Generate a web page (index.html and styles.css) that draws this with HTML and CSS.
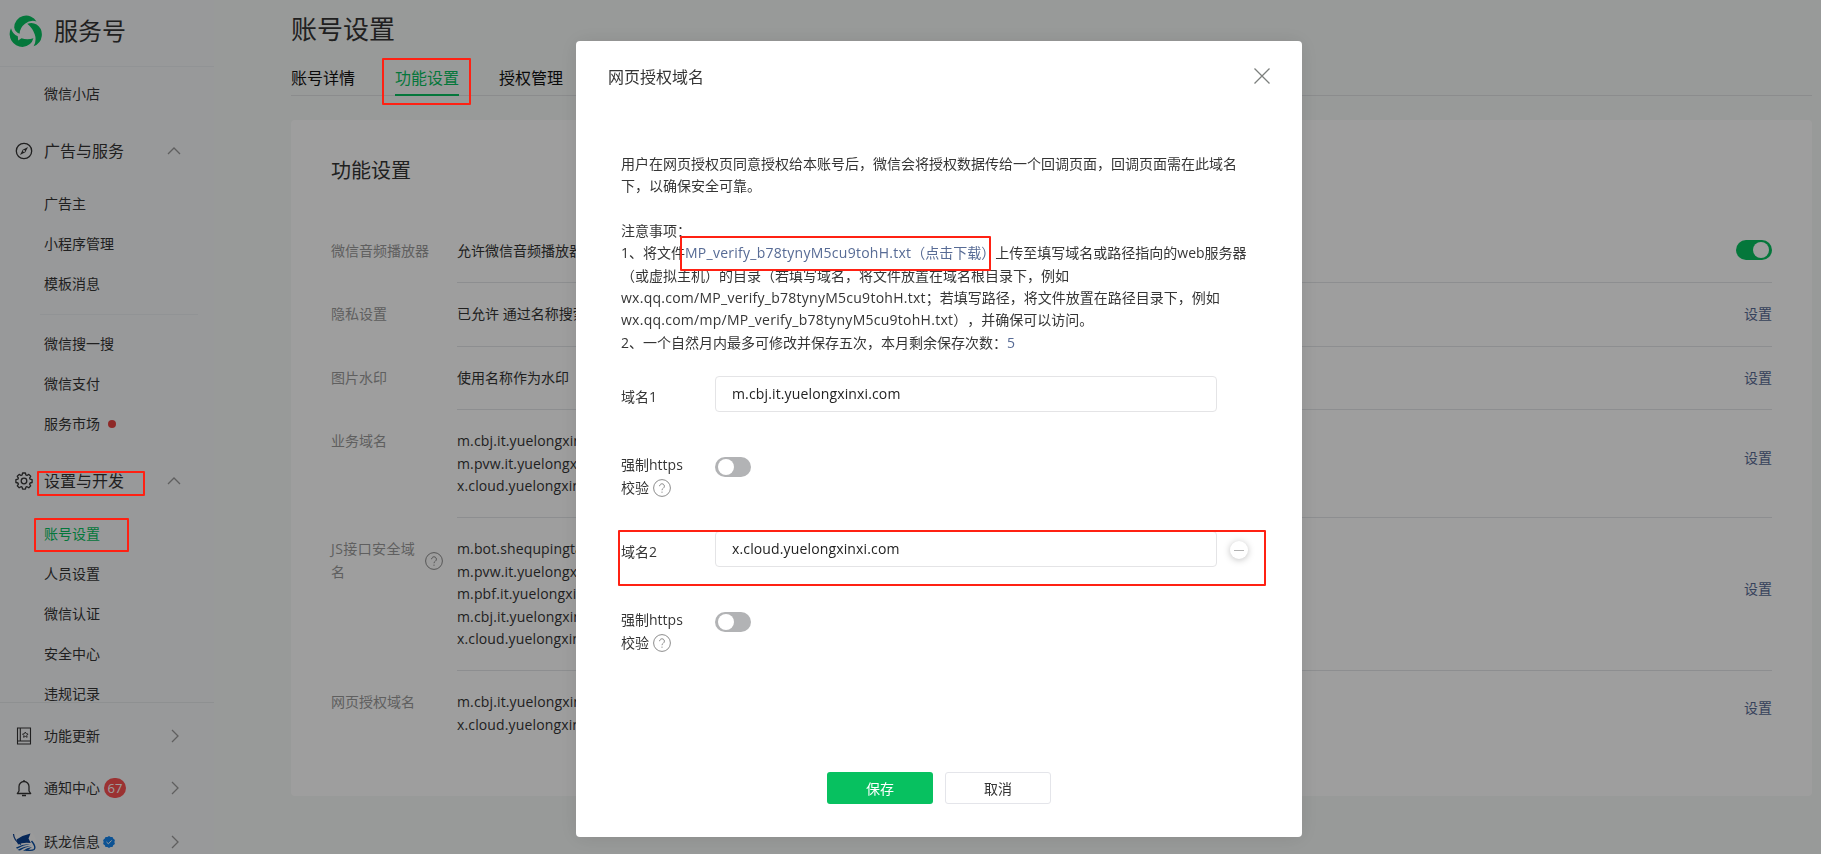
FILE: index.html
```
<!DOCTYPE html>
<html lang="zh-CN">
  <head>
    <meta charset="utf-8">
    <title>服务号</title>
    <link rel="stylesheet" href="styles.css">
  </head>
  <body>
  <div class="page">
    <div class="sidebar">
      <div class="logo">
        <svg width="34" height="34" viewBox="0 0 34 34" fill="#07c160">
          <path d="M6.200 13.500A12 12 0 0 1 28.500 7.400Q22.500 5.400 17 9.800Q12 13.600 11.600 19.700Q6.900 17.900 6.200 13.500Z"/>
          <path d="M19.300 9.800Q24.500 8 28.600 10.600A12.300 12.300 0 0 1 25.600 32.300Q28.900 26.400 26.700 20.300Q24.700 14.300 19.300 9.800Z"/>
          <path d="M3 14.200Q4.500 20 9.800 22.300L10.200 26.600L13.500 24.300Q19.500 26 25.400 24.300Q23.500 32 14.500 33A13 13 0 0 1 3 14.200Z"/>
        </svg>
        <span>服务号</span>
      </div>
      <div class="menu">
        <div class="item">微信小店</div>
        <div class="group">
          <svg class="icon" width="18" height="18" viewBox="0 0 18 18" fill="none" stroke="#353535" stroke-width="1.3">
            <circle cx="9" cy="9" r="7.700"/>
            <path d="M13 5L10.300 10.300L5 13L7.700 7.700Z" fill="#353535" stroke="none"/>
            <circle cx="9" cy="9" r="1" fill="#f6f7f9" stroke="none"/>
          </svg>
          <span>广告与服务</span>
          <svg class="arrow" width="14" height="8" viewBox="0 0 14 8" fill="none" stroke="#9a9a9a" stroke-width="1.300"><path d="M1 7L7 1L13 7"/></svg>
        </div>
        <div class="item">广告主</div>
        <div class="item">小程序管理</div>
        <div class="item">模板消息</div>
        <div class="line"></div>
        <div class="item">微信搜一搜</div>
        <div class="item">微信支付</div>
        <div class="item">服务市场<i class="dot"></i></div>
        <div class="group">
          <svg class="icon" width="18" height="18" viewBox="0 0 18 18" fill="none" stroke="#353535" stroke-width="1.3" stroke-linejoin="round">
            <path d="M7.600 1h2.800l.5 2 1.100.5 1.800-1.100 1.900 1.900-1.100 1.800.5 1.100 2 .5v2.800l-2 .5-.5 1.100 1.100 1.800-1.900 1.900-1.800-1.100-1.100.5-.5 2H7.600l-.5-2-1.100-.5-1.800 1.100-1.900-1.900 1.100-1.800-.5-1.100-2-.5V7.700l2-.5.5-1.100-1.100-1.800 1.900-1.900L6 3.500l1.100-.5z"/>
            <circle cx="9" cy="9" r="2.800"/>
          </svg>
          <span>设置与开发</span>
          <svg class="arrow" width="14" height="8" viewBox="0 0 14 8" fill="none" stroke="#9a9a9a" stroke-width="1.300"><path d="M1 7L7 1L13 7"/></svg>
        </div>
        <div class="item active">账号设置</div>
        <div class="item">人员设置</div>
        <div class="item">微信认证</div>
        <div class="item">安全中心</div>
        <div class="item">违规记录</div>
      </div>
      <div class="side-foot">
        <div class="foot-item">
          <svg class="icon" width="18" height="18" viewBox="0 0 18 18" fill="none" stroke="#353535" stroke-width="1.100">
            <path d="M2.500 1h13v16h-13zM5.300 1v13M2.500 14h13"/>
            <path d="M10.300 5l.9 1.700 1.900.3-1.300 1.400.3 1.900-1.800-.9-1.700.9.3-1.900L7.500 7l1.900-.3z" stroke-width=".9"/>
          </svg>
          <span>功能更新</span>
          <svg class="arrow" width="8" height="14" viewBox="0 0 8 14" fill="none" stroke="#9a9a9a" stroke-width="1.300"><path d="M1 1L7 7L1 13"/></svg>
        </div>
        <div class="foot-item">
          <svg class="icon" width="18" height="18" viewBox="0 0 18 18" fill="none" stroke="#353535" stroke-width="1.300">
            <path d="M2.300 14.500L4 12V7.500a5 5 0 0 1 10 0V12l1.700 2.500z" stroke-linejoin="round"/>
            <path d="M9 1v1.500M7 16.500h4"/>
          </svg>
          <span>通知中心</span>
          <b class="badge">67</b>
          <svg class="arrow" width="8" height="14" viewBox="0 0 8 14" fill="none" stroke="#9a9a9a" stroke-width="1.300"><path d="M1 1L7 7L1 13"/></svg>
        </div>
        <div class="foot-item user">
          <svg class="avatar" width="24" height="24" viewBox="0 0 24 24">
            <circle cx="12" cy="12" r="12" fill="#fafafa"/>
            <path d="M4.500 9.500Q11 5 18.500 3.500L16.500 8.500L18.800 13Q11 12 6 14.500Z" fill="#0b3f8f"/>
            <path d="M1.500 4Q2 11 9 14.500" fill="none" stroke="#0b3f8f" stroke-width="1.200"/>
            <path d="M4 17.500Q11 13.500 18 14Q11 15 5 18.700ZM5.500 20Q12 16 19 15.700Q12 17.500 8 20.500ZM11 20.700Q15 17.800 20 17L15 20.700Z" fill="#0b4fa5"/>
            <path d="M19.500 11Q24.500 17 22 19.500Q20 21 14 20" fill="none" stroke="#0b4fa5" stroke-width="1.400"/>
          </svg>
          <span>跃龙信息</span>
          <svg class="verify" width="12" height="12" viewBox="0 0 12 12">
            <path d="M6 0l1.600 1 1.900-.1.700 1.700L11.900 4 11.400 6l.5 2-1.700 1.300-.7 1.700-1.900 0L6 12l-1.600-1-1.900 0-.7-1.700L.1 8 .6 6 .1 4l1.700-1.400.7-1.700L4.400 1z" fill="#1485ee"/>
            <path d="M3.500 6l1.900 1.800L8.700 4.400" fill="none" stroke="#fff"/>
          </svg>
          <svg class="arrow" width="8" height="14" viewBox="0 0 8 14" fill="none" stroke="#9a9a9a" stroke-width="1.300"><path d="M1 1L7 7L1 13"/></svg>
        </div>
      </div>
    </div>

    <div class="main">
      <h1>账号设置</h1>
      <div class="tabs">
        <div class="tab">账号详情</div>
        <div class="tab current">功能设置</div>
        <div class="tab">授权管理</div>
      </div>
      <div class="card">
        <h2>功能设置</h2>
        <div class="row">
          <div class="label"><span>微信音频播放器</span></div>
          <div class="content"><div>允许微信音频播放器播放</div><div class="switch on"></div></div>
        </div>
        <div class="row">
          <div class="label"><span>隐私设置</span></div>
          <div class="content"><div>已允许 通过名称搜索到</div><a class="link">设置</a></div>
        </div>
        <div class="row">
          <div class="label"><span>图片水印</span></div>
          <div class="content"><div>使用名称作为水印</div><a class="link">设置</a></div>
        </div>
        <div class="row multi">
          <div class="label"><span>业务域名</span></div>
          <div class="content">
            <div class="hosts">m.cbj.it.yuelongxinxi<br>m.pvw.it.yuelongxinxi<br>x.cloud.yuelongxinxi</div>
            <a class="link">设置</a>
          </div>
        </div>
        <div class="row multi">
          <div class="label wide">
            <span>JS接口安全域<br>名</span>
            <svg class="help" width="18" height="18" viewBox="0 0 18 18" fill="none" stroke="#8c8c8c"><circle cx="9" cy="9" r="8.400"/><path d="M6.600 7.200a2.400 2.400 0 1 1 3.700 2Q9 10 9 11.200M9 12.600v1.200"/></svg>
          </div>
          <div class="content">
            <div class="hosts">m.bot.shequpingtai<br>m.pvw.it.yuelongxinxi<br>m.pbf.it.yuelongxinxi<br>m.cbj.it.yuelongxinxi<br>x.cloud.yuelongxinxi</div>
            <a class="link">设置</a>
          </div>
        </div>
        <div class="row multi last">
          <div class="label"><span>网页授权域名</span></div>
          <div class="content">
            <div class="hosts">m.cbj.it.yuelongxinxi<br>x.cloud.yuelongxinxi</div>
            <a class="link">设置</a>
          </div>
        </div>
      </div>
    </div>
  </div>

  <div class="mask">
    <div class="dialog">
      <div class="dialog-head">
        <h3>网页授权域名</h3>
        <svg width="16" height="16" viewBox="0 0 16 16" fill="none" stroke="#7c7f7d" stroke-width="1.300"><path d="M.5.5l15 15M15.500.5l-15 15"/></svg>
      </div>
      <div class="dialog-body">
        <p>用户在网页授权页同意授权给本账号后，微信会将授权数据传给一个回调页面，回调页面需在此域名<br>下，以确保安全可靠。</p>
        <p class="notice">
          注意事项：<br>
          1、将文件<a class="file"><span class="name">MP_verify_b78tynyM5cu9tohH.txt</span>（点击下载）</a>上传至填写域名或路径指向的web服务器<br>
          （或虚拟主机）的目录（若填写域名，将文件放置在域名根目录下，例如<br>
          <span class="name">wx.qq.com/MP_verify_b78tynyM5cu9tohH.txt</span>；若填写路径，将文件放置在路径目录下，例如<br>
          <span class="name">wx.qq.com/mp/MP_verify_b78tynyM5cu9tohH.txt</span>），并确保可以访问。<br>
          2、一个自然月内最多可修改并保存五次，本月剩余保存次数：<a class="file">5</a>
        </p>
        <div class="domain">
          <div class="field">
            <label>域名1</label>
            <input type="text" value="m.cbj.it.yuelongxinxi.com">
          </div>
          <div class="field check">
            <label>强制https<br>校验<svg class="help" width="18" height="18" viewBox="0 0 18 18" fill="none" stroke="#8c8c8c"><circle cx="9" cy="9" r="8.400"/><path d="M6.600 7.200a2.400 2.400 0 1 1 3.700 2Q9 10 9 11.200M9 12.600v1.200"/></svg></label>
            <div class="switch"></div>
          </div>
        </div>
        <div class="domain">
          <div class="field">
            <label>域名2</label>
            <input type="text" value="x.cloud.yuelongxinxi.com">
            <div class="minus"></div>
          </div>
          <div class="field check">
            <label>强制https<br>校验<svg class="help" width="18" height="18" viewBox="0 0 18 18" fill="none" stroke="#8c8c8c"><circle cx="9" cy="9" r="8.400"/><path d="M6.600 7.200a2.400 2.400 0 1 1 3.700 2Q9 10 9 11.200M9 12.600v1.200"/></svg></label>
            <div class="switch"></div>
          </div>
        </div>
      </div>
      <div class="dialog-foot">
        <button class="btn primary">保存</button>
        <button class="btn">取消</button>
      </div>
    </div>
  </div>

  <div class="mark mark-group"></div>
  <div class="mark mark-item"></div>
  <div class="mark mark-tab"></div>
  <div class="mark mark-file"></div>
  <div class="mark mark-domain"></div>
  </body>
</html>
```

FILE: styles.css
```
* {
    box-sizing: border-box;
}

body {
    margin: 0;
    height: 854px;
    overflow: hidden;
    background-color: #f6f8f7;
    color: #353535;
    font-family: "Open Sans", "Noto Sans CJK SC", sans-serif;
    font-size: 14px;
    line-height: 22.4px;
    text-spacing-trim: space-all;
}

h1, h2, h3, p {
    margin: 0;
    font-weight: normal;
}

svg {
    flex: none;
}

.page {
    display: flex;
    height: 854px;
}

/* sidebar */
.sidebar {
    display: flex;
    flex-direction: column;
    width: 214px;
    height: 854px;
    background-color: #f6f7f9;
    overflow: hidden;
}

.logo {
    display: flex;
    flex: none;
    height: 67px;
    padding: 14px 0 0 8px;
    border-bottom: 1px solid #ebedf0;
}

.logo span {
    margin: 0 0 0 12px;
    font-size: 24px;
    line-height: 34px;
}

.menu {
    height: 635px;
    padding-top: 7px;
    overflow: hidden;
}

.item {
    display: flex;
    align-items: center;
    height: 40px;
    padding-left: 44px;
}

.item.active {
    color: #07c160;
}

.dot {
    width: 8px;
    height: 8px;
    margin-left: 8px;
    border-radius: 50%;
    background-color: #e64340;
}

.group {
    display: flex;
    align-items: center;
    height: 70px;
    padding: 4px 33px 0 15px;
    font-size: 16px;
}

.group .icon, .foot-item .icon {
    margin-right: 11px;
}

.arrow {
    margin-left: auto;
}

.line {
    height: 1px;
    margin: 10px 16px 9px 40px;
    background-color: #ebedf0;
}

.side-foot {
    flex: none;
    height: 152px;
    padding-top: 7px;
    border-top: 1px solid #e6e8eb;
}

.foot-item {
    display: flex;
    align-items: center;
    height: 52px;
    padding: 0 35px 0 15px;
}

.foot-item.user {
    height: 56px;
    padding-left: 12px;
}

.avatar {
    margin-right: 8px;
}

.verify {
    margin-left: 3px;
}

.badge {
    width: 22px;
    height: 20px;
    margin-left: 4px;
    border-radius: 10px;
    background-color: #fa5151;
    color: #fff;
    font-size: 13px;
    font-weight: normal;
    line-height: 20px;
    text-align: center;
}

/* settings page */
.main {
    width: 1521px;
    margin-left: 77px;
}

h1 {
    padding-top: 12px;
    font-size: 26px;
    line-height: 34px;
}

.tabs {
    display: flex;
    gap: 40px;
    height: 50px;
    border-bottom: 1px solid #e0e2e4;
    color: #111;
    font-size: 16px;
}

.tab {
    height: 50px;
    padding-top: 21px;
}

.tab.current {
    border-bottom: 2px solid #07c160;
    color: #07c160;
}

.card {
    height: 676px;
    margin-top: 24px;
    padding: 37px 40px 0;
    border-radius: 4px;
    background-color: #fff;
}

h2 {
    margin-bottom: 35px;
    font-size: 20px;
    line-height: 28px;
}

.row {
    display: flex;
}

.label {
    display: flex;
    align-items: center;
    align-self: flex-start;
    width: 126px;
    padding-top: 20px;
    color: #9a9a9a;
}

.label.wide {
    letter-spacing: .4px;
}

.label .help {
    margin-left: 10px;
}

.content {
    display: flex;
    flex: 1;
    align-items: center;
    justify-content: space-between;
    padding: 20px 0;
    border-bottom: 1px solid #e4e6e9;
}

.hosts {
    letter-spacing: .14px;
}

.last .content {
    border-bottom: none;
}

.link {
    color: #576b95;
}

.multi .link {
    margin-bottom: 11px;
}

.switch {
    width: 36px;
    height: 20px;
    padding: 2px 3px;
    border-radius: 10px;
    background-color: #b2b3b5;
}

.switch::before {
    content: "";
    display: block;
    width: 16px;
    height: 16px;
    border-radius: 50%;
    background-color: #fff;
}

.switch.on {
    margin-bottom: 2px;
    background-color: #07c160;
}

.switch.on::before {
    margin-left: auto;
}

/* dialog */
.mask {
    position: fixed;
    top: 0;
    left: 0;
    width: 100%;
    height: 100%;
    padding: 41px 0 0 576px;
    background-color: rgba(0, 0, 0, .38);
}

.dialog {
    width: 726px;
    height: 796px;
    border-radius: 4px;
    background-color: #fff;
    box-shadow: 0 1px 20px rgba(0, 0, 0, .1);
}

.dialog-head {
    display: flex;
    justify-content: space-between;
    padding: 27px 32px 0;
}

h3 {
    margin-top: -2px;
    font-size: 16px;
}

.dialog-body {
    height: 683.6px;
    padding: 64.2px 0 0 45px;
}

.dialog-body p {
    margin-bottom: 22.3px;
    white-space: nowrap;
}

.dialog-body .notice {
    margin-bottom: 21.7px;
}

.file {
    color: #576b95;
}

.name {
    letter-spacing: .26px;
}

.domain {
    height: 155px;
}

.field {
    display: flex;
    height: 81px;
}

.field label {
    width: 94px;
    padding-top: 10px;
}

.field input {
    width: 502px;
    height: 36px;
    padding: 0 16px 1px;
    border: 1px solid #e4e4e6;
    border-radius: 4px;
    color: #222;
    font: inherit;
    letter-spacing: .14px;
}

.field.check label {
    margin-top: -4px;
    padding-top: 0;
    line-height: 23.5px;
}

.field .help {
    margin-left: 4px;
    vertical-align: -4px;
}

.minus {
    width: 18px;
    height: 18px;
    margin: 10px 0 0 13px;
    padding: 9px 4px;
    border-radius: 50%;
    background-color: #fff;
    box-shadow: 0 1px 7px rgba(0, 0, 0, .25);
}

.minus::before {
    content: "";
    display: block;
    height: 1px;
    background-color: #b2b2b2;
}

.dialog-foot {
    display: flex;
    justify-content: center;
    gap: 12px;
}

.btn {
    width: 106px;
    height: 32px;
    padding: 0 0 1px;
    border: 1px solid #e4e5ea;
    border-radius: 3px;
    background-color: #fff;
    color: #353535;
    font-family: inherit;
    font-size: 14px;
}

.btn.primary {
    border: none;
    background-color: #07c160;
    color: #fff;
}

/* red frames lying over the screen */
.mark {
    position: absolute;
    border: 2px solid #ff2113;
    border-radius: 1px;
}

.mark-group {
    left: 37px;
    top: 471px;
    width: 108px;
    height: 25px;
}

.mark-item {
    left: 34px;
    top: 518px;
    width: 95px;
    height: 34px;
}

.mark-tab {
    left: 382px;
    top: 58px;
    width: 89px;
    height: 47px;
}

.mark-file {
    left: 680px;
    top: 236px;
    width: 311px;
    height: 35px;
}

.mark-domain {
    left: 618px;
    top: 530px;
    width: 648px;
    height: 56px;
}
```
